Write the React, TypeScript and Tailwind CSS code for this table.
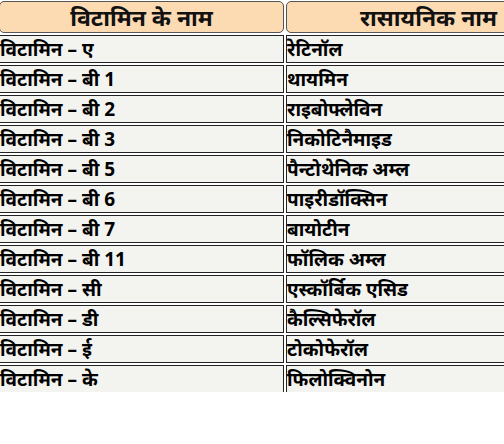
const rows: [string, string][] = [
  ["विटामिन – ए", "रेटिनॉल"],
  ["विटामिन – बी 1", "थायमिन"],
  ["विटामिन – बी 2", "राइबोफ्लेविन"],
  ["विटामिन – बी 3", "निकोटिनैमाइड"],
  ["विटामिन – बी 5", "पैन्टोथेनिक अम्ल"],
  ["विटामिन – बी 6", "पाइरीडॉक्सिन"],
  ["विटामिन – बी 7", "बायोटीन"],
  ["विटामिन – बी 11", "फॉलिक अम्ल"],
  ["विटामिन – सी", "एस्कॉर्बिक एसिड"],
  ["विटामिन – डी", "कैल्सिफेरॉल"],
  ["विटामिन – ई", "टोकोफेरॉल"],
  ["विटामिन – के", "फिलोक्विनोन"],
];

export default function App() {
  return (
    <div className="w-[504px] h-[444px] bg-white overflow-hidden font-['Noto_Sans','Liberation_Sans',sans-serif]">
      <div className="h-[392px] overflow-hidden">
        <table className="-ml-[3px] -mt-[1px] w-[576px] border-separate border-spacing-[2px] table-fixed">
          <colgroup>
            <col className="w-[285px]" />
            <col className="w-[285px]" />
          </colgroup>
          <thead>
            <tr>
              <th className="h-[32px] rounded-[5px] border border-[#555] bg-[#fcdab2] text-center text-[23px] font-bold leading-none text-[#111]">
                विटामिन के नाम
              </th>
              <th className="h-[32px] rounded-[5px] border border-[#555] bg-[#fcdab2] text-center text-[23px] font-bold leading-none text-[#111]">
                रासायनिक नाम
              </th>
            </tr>
          </thead>
          <tbody>
            {rows.map(([a, b]) => (
              <tr key={a}>
                <td className="h-[28px] border border-[#222] bg-[#f3f3f0] px-0 text-left text-[19px] font-bold leading-none text-black">
                  {a}
                </td>
                <td className="h-[28px] border border-[#222] bg-[#f3f3f0] px-0 text-left text-[19px] font-bold leading-none text-black">
                  {b}
                </td>
              </tr>
            ))}
          </tbody>
        </table>
      </div>
    </div>
  );
}
